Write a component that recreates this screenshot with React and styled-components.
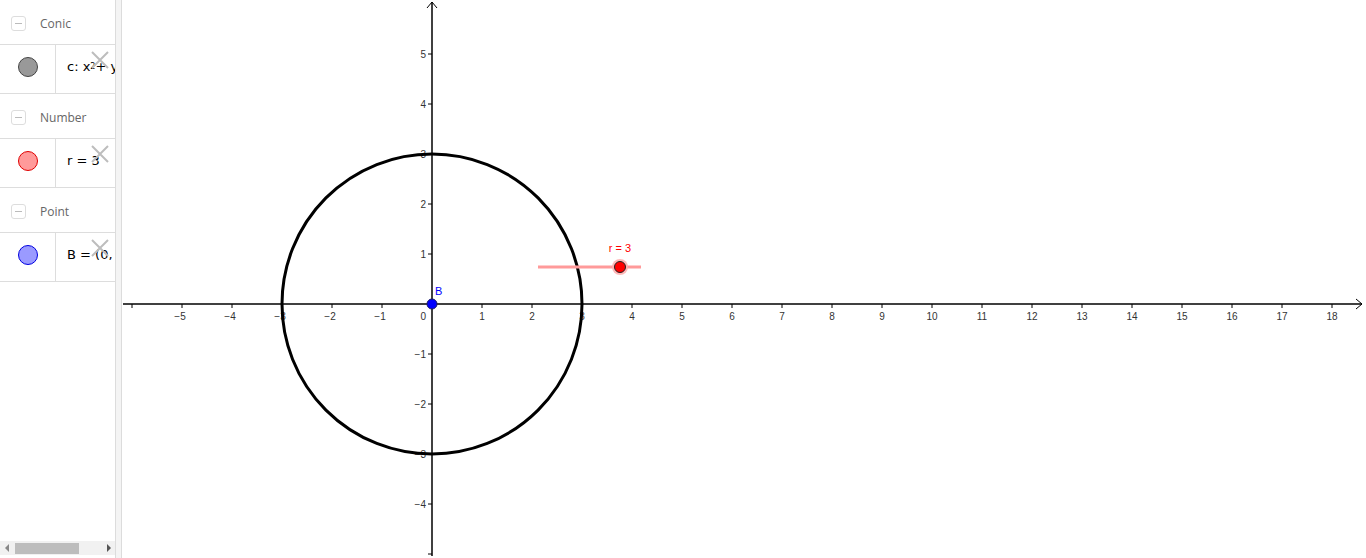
import React from 'react'
import styled, { createGlobalStyle } from 'styled-components'

const GlobalStyle = createGlobalStyle`
  html, body {
    margin: 0;
    padding: 0;
    background: #ffffff;
    overflow: hidden;
  }
  body {
    font-family: "Open Sans", "Liberation Sans", sans-serif;
  }
`

const Page = styled.div`
  display: flex;
  width: 1366px;
  height: 558px;
  background: #ffffff;
`

const AlgebraPanel = styled.div`
  display: flex;
  flex-direction: column;
  width: 115px;
  height: 558px;
  overflow: hidden;
  background: #ffffff;
`

const Splitter = styled.div`
  width: 5px;
  height: 558px;
  background: #f4f4f4;
  border-left: 1px solid #dcdcdc;
  border-right: 1px solid #dcdcdc;
`

const Graphics = styled.div`
  flex: 1;
  height: 558px;
  position: relative;
`

const GroupHeader = styled.div`
  display: flex;
  align-items: center;
  height: 42px;
  padding: 2px 0 0 11px;
  gap: 14px;
  flex-shrink: 0;
  border-bottom: 1px solid #dddddd;
  color: #666666;
  font-size: 12px;
`

const Toggle = styled.div`
  width: 13px;
  height: 13px;
  border: 1px solid #dddddd;
  border-radius: 3px;
  display: flex;
  align-items: center;
  justify-content: center;

  &::after {
    content: '';
    width: 7px;
    height: 1px;
    background: #bbbbbb;
  }
`

const ItemRow = styled.div`
  display: flex;
  height: 48px;
  flex-shrink: 0;
  border-bottom: 1px solid #dddddd;
`

const MarbleCell = styled.div`
  width: 56px;
  flex-shrink: 0;
  display: flex;
  align-items: center;
  justify-content: center;
  padding-bottom: 4px;
  box-sizing: border-box;
  border-right: 1px solid #dddddd;
`

const Marble = styled.div`
  width: 18px;
  height: 18px;
  border-radius: 50%;
  background: ${(p) => p.$fill};
  border: 1px solid ${(p) => p.$stroke};
`

const Formula = styled.div`
  position: relative;
  flex: 1;
  display: flex;
  align-items: center;
  box-sizing: border-box;
  padding: 0 0 5px 11px;
  white-space: nowrap;
  overflow: hidden;
  font-family: "DejaVu Sans", "Liberation Sans", sans-serif;
  font-size: 13px;
  color: #000000;

  sup {
    font-size: 8px;
    vertical-align: 6px;
  }
`

const DeleteIcon = styled.svg`
  position: absolute;
  left: 35px;
  top: 6px;
`

const Spacer = styled.div`
  flex: 1;
`

const ScrollBar = styled.div`
  display: flex;
  align-items: center;
  height: 14px;
  flex-shrink: 0;
  margin-bottom: 3px;
  padding: 0 4px 0 5px;
  gap: 6px;
  background: #f1f1f1;
`

const Arrow = styled.div`
  width: 0;
  height: 0;
  border-top: 4px solid transparent;
  border-bottom: 4px solid transparent;
  ${(p) => (p.$dir === 'left' ? 'border-right: 4px solid #888888;' : 'border-left: 4px solid #555555;')}
`

const Thumb = styled.div`
  width: 64px;
  height: 11px;
  background: #bdbdbd;
`

const Track = styled.div`
  flex: 1;
`

const groups = [
  {
    title: 'Conic',
    fill: '#999999',
    stroke: '#444444',
    formula: (
      <>
        c: x<sup>2</sup> + y<sup>2</sup> = 9
      </>
    ),
  },
  { title: 'Number', fill: '#ff9a9a', stroke: '#e00000', formula: 'r = 3' },
  { title: 'Point', fill: '#9a9aff', stroke: '#0000e0', formula: 'B = (0, 0)' },
]

const Cross = () => (
  <DeleteIcon width="18" height="18" viewBox="0 0 18 18">
    <path d="M1 1 L17 17 M17 1 L1 17" stroke="#bdbdbd" strokeWidth="2" fill="none" />
  </DeleteIcon>
)

const OX = 432
const OY = 304
const U = 50

const fmt = (n) => (n < 0 ? '\u2212' + Math.abs(n) : String(n))

const Plot = () => {
  const xs = []
  for (let i = -6; i <= 18; i++) xs.push(i)
  const ys = []
  for (let i = -5; i <= 5; i++) ys.push(i)
  const labelFont = { fontFamily: '"Liberation Sans", Arial, sans-serif', fontSize: 10, fill: '#333' }
  return (
    <svg width="1244" height="558" viewBox="122 0 1244 558" style={{ display: 'block' }}>
      {/* x axis */}
      <line x1="123" y1={OY} x2="1362" y2={OY} stroke="#000" strokeWidth="1.5" />
      <path d="M1356 299 L1362 304 L1356 309" stroke="#000" strokeWidth="1" fill="none" />
      {/* y axis */}
      <line x1={OX} y1="2" x2={OX} y2="556" stroke="#000" strokeWidth="1.5" />
      <path d="M427 8 L432 2 L437 8" stroke="#000" strokeWidth="1" fill="none" />
      {xs.map((i) =>
        i === 0 ? null : (
          <g key={'x' + i}>
            <line x1={OX + i * U} y1={OY} x2={OX + i * U} y2={OY + 4} stroke="#000" strokeWidth="1" />
            {i > -6 && (
              <text x={OX + i * U + (i < 0 ? -2 : 0)} y={OY + 16} textAnchor="middle" {...labelFont}>
                {fmt(i)}
              </text>
            )}
          </g>
        )
      )}
      {ys.map((i) =>
        i === 0 ? null : (
          <g key={'y' + i}>
            <line x1={OX - 4} y1={OY - i * U} x2={OX} y2={OY - i * U} stroke="#000" strokeWidth="1" />
            {i > -5 && (
              <text x={OX - 6} y={OY - i * U + 4} textAnchor="end" {...labelFont}>
                {fmt(i)}
              </text>
            )}
          </g>
        )
      )}
      <text x={OX - 6} y={OY + 16} textAnchor="end" {...labelFont}>0</text>
      {/* circle c */}
      <circle cx={OX} cy={OY} r={3 * U} stroke="#000" strokeWidth="3" fill="none" />
      {/* slider r */}
      <line x1="538" y1="267" x2="641" y2="267" stroke="#ff9a9a" strokeWidth="3" />
      <circle cx="620" cy="267" r="8" fill="#ffb0b0" opacity="0.9" />
      <circle cx="620" cy="267" r="5.5" fill="#ff0000" stroke="#222" strokeWidth="1" />
      <text x="620" y="252" textAnchor="middle" fontFamily='"Liberation Sans", Arial, sans-serif' fontSize="11" fill="#ff0000">
        r = 3
      </text>
      {/* point B */}
      <circle cx={OX} cy={OY} r="5" fill="#0000ff" stroke="#1a1a66" strokeWidth="1" />
      <text x="435" y="295" fontFamily='"Liberation Sans", Arial, sans-serif' fontSize="11" fill="#0000ff">
        B
      </text>
    </svg>
  )
}

export default function App() {
  return (
    <Page>
      <GlobalStyle />
      <AlgebraPanel>
        {groups.map((g) => (
          <React.Fragment key={g.title}>
            <GroupHeader>
              <Toggle />
              {g.title}
            </GroupHeader>
            <ItemRow>
              <MarbleCell>
                <Marble $fill={g.fill} $stroke={g.stroke} />
              </MarbleCell>
              <Formula>
                {g.formula}
                <Cross />
              </Formula>
            </ItemRow>
          </React.Fragment>
        ))}
        <Spacer />
        <ScrollBar>
          <Arrow $dir="left" />
          <Thumb />
          <Track />
          <Arrow $dir="right" />
        </ScrollBar>
      </AlgebraPanel>
      <Splitter />
      <Graphics>
        <Plot />
      </Graphics>
    </Page>
  )
}
